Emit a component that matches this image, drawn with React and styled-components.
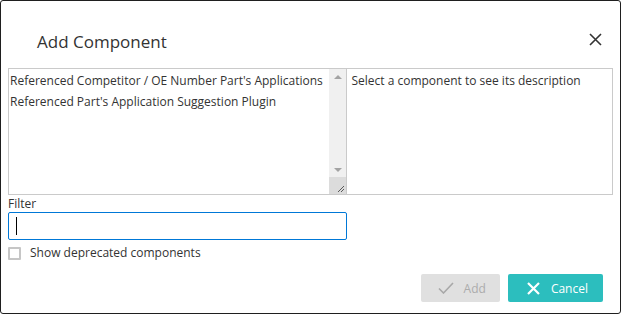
import React from 'react';
import styled, { createGlobalStyle } from 'styled-components';

const Global = createGlobalStyle`
  html, body { margin: 0; background: #fff; }
  body { font-family: "Open Sans", "Noto Sans", sans-serif; color: #333; }
`;

const Dialog = styled.div`
  width: 621px;
  height: 314px;
  box-sizing: border-box;
  border: 1px solid #1f1f1f;
  border-radius: 3px;
  background: #fff;
  display: flex;
  flex-direction: column;
`;

const Header = styled.div`
  display: flex;
  justify-content: space-between;
  align-items: flex-start;
  height: 67px;
  box-sizing: border-box;
  padding: 29px 18px 0 36px;
`;

const Title = styled.h2`
  margin: 0;
  font-size: 17px;
  font-weight: 400;
  line-height: 24px;
  color: #333;
`;

const CloseButton = styled.button`
  margin-top: 3px;
  padding: 0;
  width: 13px;
  height: 13px;
  border: 0;
  background: none;
  display: flex;
  cursor: pointer;
`;

const Body = styled.div`
  padding: 0 7px;
  font-size: 12px;
`;

const Panes = styled.div`
  display: flex;
  height: 127px;
`;

const ListBox = styled.div`
  width: 340px;
  box-sizing: border-box;
  border: 1px solid #cacaca;
  display: flex;
`;

const Options = styled.div`
  flex: 1;
  padding: 1px 0 0 1px;
`;

const Option = styled.div`
  line-height: 21px;
  white-space: nowrap;
  overflow: hidden;
`;

const ScrollBar = styled.div`
  width: 17px;
  background: #f0f0f0;
  display: flex;
  flex-direction: column;
  align-items: center;
`;

const Arrow = styled.div`
  width: 0;
  height: 0;
  border-left: 4px solid transparent;
  border-right: 4px solid transparent;
  ${p => p.$down
    ? 'border-top: 4px solid #a3a3a3; margin-top: auto; margin-bottom: 5px;'
    : 'border-bottom: 4px solid #a3a3a3; margin-top: 6px;'}
`;

const Grip = styled.div`
  width: 17px;
  height: 17px;
  background: #dcdcdc;
  display: flex;
`;

const Description = styled.div`
  width: 267px;
  margin-left: -1px;
  box-sizing: border-box;
  border: 1px solid #cacaca;
  padding: 1px 0 0 4px;
  line-height: 21px;
`;

const Label = styled.label`
  display: block;
  margin-top: 1px;
  line-height: 16px;
`;

const FilterInput = styled.div`
  width: 339px;
  height: 28px;
  box-sizing: border-box;
  border: 1px solid #0078d7;
  border-radius: 2px;
  padding-left: 7px;
  display: flex;
  align-items: center;
`;

const Caret = styled.span`
  width: 1px;
  height: 18px;
  background: #000;
`;

const CheckRow = styled.label`
  margin-top: 5px;
  display: flex;
  align-items: center;
  gap: 9px;
  line-height: 16px;
`;

const CheckBox = styled.span`
  width: 13px;
  height: 13px;
  box-sizing: border-box;
  border: 2px solid #c6c6c6;
  border-radius: 1px;
`;

const Footer = styled.div`
  margin-top: 13px;
  padding-right: 17px;
  display: flex;
  justify-content: flex-end;
  gap: 8px;
`;

const Button = styled.button`
  height: 28px;
  box-sizing: border-box;
  border: 0;
  border-radius: 2px;
  display: flex;
  align-items: center;
  font-family: inherit;
  font-size: 12px;
  line-height: 16px;
  padding: 2px ${p => p.$pr}px 0 ${p => p.$pl}px;
  gap: ${p => p.$gap}px;
  background: ${p => (p.$primary ? '#2cbebe' : '#e0e0e0')};
  color: ${p => (p.$primary ? '#fff' : '#acacac')};
  cursor: ${p => (p.$primary ? 'pointer' : 'default')};
  & > svg { margin-top: -2px; }
`;

const XIcon = ({ size = 13, color = '#333', width = 1.6 }) => (
  <svg width={size} height={size} viewBox="0 0 13 13">
    <path d="M1 1 L12 12 M12 1 L1 12" stroke={color} strokeWidth={width} fill="none" />
  </svg>
);

const CheckIcon = () => (
  <svg width="16" height="12" viewBox="0 0 16 12">
    <path d="M1 6.5 L5.5 11 L15 1" stroke="#a8a8a8" strokeWidth="1.6" fill="none" />
  </svg>
);

const App = () => (
  <>
    <Global />
    <Dialog>
      <Header>
        <Title>Add Component</Title>
        <CloseButton aria-label="Close"><XIcon /></CloseButton>
      </Header>
      <Body>
        <Panes>
          <ListBox>
            <Options>
              <Option>Referenced Competitor / OE Number Part's Applications</Option>
              <Option>Referenced Part's Application Suggestion Plugin</Option>
            </Options>
            <ScrollBar>
              <Arrow />
              <Arrow $down />
              <Grip>
                <svg width="17" height="17" viewBox="0 0 17 17">
                  <path d="M15 9 L9 15 M15 12 L12 15" stroke="#5a5a5a" strokeWidth="1" fill="none" />
                </svg>
              </Grip>
            </ScrollBar>
          </ListBox>
          <Description>Select a component to see its description</Description>
        </Panes>
        <Label>Filter</Label>
        <FilterInput><Caret /></FilterInput>
        <CheckRow>
          <CheckBox />
          Show deprecated components
        </CheckRow>
      </Body>
      <Footer>
        <Button $pl={17} $pr={14} $gap={10} disabled><CheckIcon />Add</Button>
        <Button $primary $pl={19} $pr={15} $gap={11}><XIcon color="#fff" width={2.2} />Cancel</Button>
      </Footer>
    </Dialog>
  </>
);

export default App;
